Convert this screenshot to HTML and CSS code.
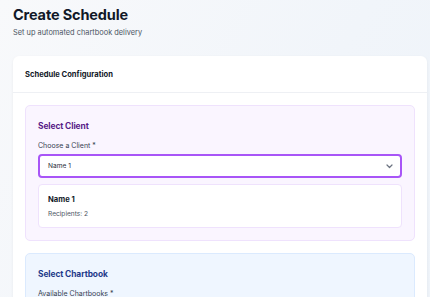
FILE: index.html
```html
<!DOCTYPE html>
<html lang="en">
<head>
<meta charset="utf-8">
<title>Create Schedule</title>
<link rel="stylesheet" href="styles.css">
</head>
<body>
<div class="page">
  <header class="page-head">
    <h1 class="page-title">Create Schedule</h1>
    <p class="page-sub">Set up automated chartbook delivery</p>
  </header>
  <section class="card">
    <div class="card-head">Schedule Configuration</div>
    <div class="card-body">
      <div class="panel panel-purple">
        <h2 class="panel-title">Select Client</h2>
        <label class="field-label">Choose a Client *</label>
        <div class="select">
          <span>Name 1</span>
          <svg class="chev" width="7" height="5" viewBox="0 0 7 5"><path d="M1 1l2.5 2.5L6 1" fill="none" stroke="#6b7280" stroke-width="1.2" stroke-linecap="round" stroke-linejoin="round"/></svg>
        </div>
        <div class="client-card">
          <div class="client-name">Name 1</div>
          <div class="client-meta">Recipients: 2</div>
        </div>
      </div>
      <div class="panel panel-blue">
        <h2 class="panel-title">Select Chartbook</h2>
        <label class="field-label">Available Chartbooks *</label>
      </div>
    </div>
  </section>
</div>
</body>
</html>
```
FILE: styles.css
```css
* { box-sizing: border-box; }
html, body { margin: 0; padding: 0; }
body {
  font-family: Inter, "Noto Sans", sans-serif;
  background: linear-gradient(120deg, #f8f9fb 0%, #f1f5fa 60%, #eef3f9 100%);
  color: #111827;
  min-height: 297px;
  overflow: hidden;
}
.page {
  padding: 5px 3px 0 13px;
}
.page-head { height: 51px; }
.page-title {
  margin: 0;
  font-size: 14.5px;
  line-height: 20px;
  font-weight: 700;
  letter-spacing: -0.01em;
  color: #111827;
}
.page-sub {
  margin: 3px 0 0;
  font-size: 7.4px;
  line-height: 10px;
  color: #4b5563;
}
.card {
  background: #fff;
  border-radius: 6px;
  box-shadow: 0 1px 3px rgba(15, 23, 42, 0.06);
}
.card-head {
  height: 37px;
  padding: 0 12px;
  display: flex;
  align-items: center;
  font-size: 7.6px;
  font-weight: 700;
  color: #111827;
  border-bottom: 1px solid #eef0f4;
}
.card-body {
  padding: 12px;
  display: flex;
  flex-direction: column;
  gap: 12px;
}
.panel {
  border-radius: 5px;
  padding: 14px 12px 12px;
  border: 1px solid;
}
.panel-purple { background: #faf5ff; border-color: #efe2fd; }
.panel-blue { background: #eff6ff; border-color: #dbeafe; min-height: 60px; }
.panel-title {
  margin: 0 0 9px;
  font-size: 8.4px;
  line-height: 12px;
  font-weight: 700;
  letter-spacing: -0.01em;
}
.panel-purple .panel-title { color: #581c87; }
.panel-blue .panel-title { color: #1e3a8a; }
.field-label {
  display: block;
  font-size: 7px;
  line-height: 10px;
  color: #374151;
  margin-bottom: 3px;
}
.select {
  height: 24px;
  border: 2px solid #a855f7;
  border-radius: 4px;
  background: #fff;
  display: flex;
  align-items: center;
  justify-content: space-between;
  padding: 0 7px 0 8px;
  font-size: 6.6px;
  color: #1f2937;
}
.chev { display: block; }
.client-card {
  margin-top: 6px;
  background: #fff;
  border: 1px solid #efe2fd;
  border-radius: 4px;
  padding: 10px 9px 8px;
}
.client-name {
  font-size: 7.6px;
  line-height: 10px;
  font-weight: 700;
  color: #111827;
}
.client-meta {
  margin-top: 4px;
  font-size: 6.6px;
  line-height: 10px;
  color: #4b5563;
}
```
